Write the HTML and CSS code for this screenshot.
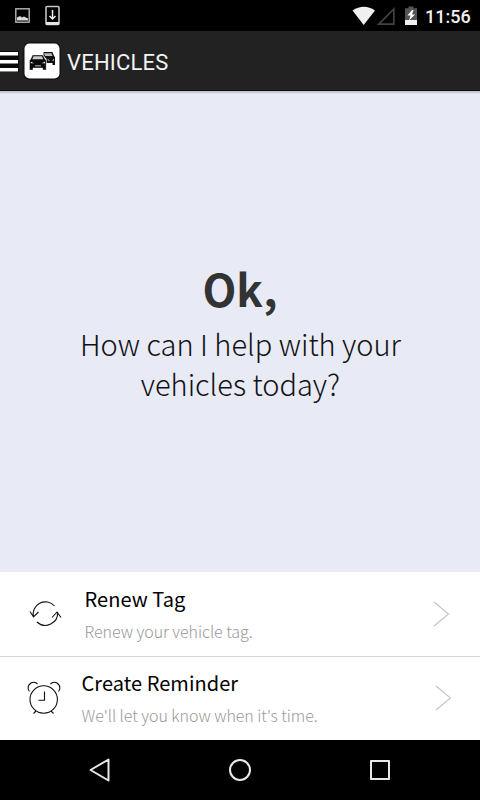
FILE: index.html
```
<!DOCTYPE html>
<html lang="en">
<head>
    <meta charset="UTF-8">
    <meta name="viewport" content="width=device-width, initial-scale=1.0">
    <title>Vehicles</title>
    <link rel="stylesheet" href="styles.css">
</head>
<body>

<div class="screen">
    <div class="status-bar">
        <svg class="status-left" width="70" height="31" viewBox="0 0 70 31">
            <rect x="15.800" y="8.800" width="13.400" height="13.400" fill="none" stroke="#b5b5b5" stroke-width="1.400"/>
            <path d="M17 20.500v-3l3-1.500 2 1.500 2-1 4 2v2z" fill="#d8d8d8"/>
            <rect x="46" y="6.500" width="13" height="18" rx="1" fill="none" stroke="#c4c4c4" stroke-width="1.600"/>
            <path d="M46 22h13v3H46z" fill="#e6e6e6"/>
            <path d="M52.500 10v9M49.500 16l3 3 3-3" fill="none" stroke="#f0f0f0" stroke-width="1.500"/>
        </svg>
        <svg class="status-right" width="70" height="31" viewBox="350 0 70 31">
            <path d="M352.500 10.500Q364 3 375 10.500L363.700 25z" fill="#f0f0f0"/>
            <path d="M393.800 9v15.200h-15z" fill="none" stroke="#434343" stroke-width="1.700"/>
            <path d="M405 8.200h3.500v-1.700h5v1.700h3.500V20h-12z" fill="#555"/>
            <path d="M405 20h12v5h-12z" fill="#f0f0f0"/>
            <path d="M412 10l-4.500 5.500h3l-1.500 5 6-6h-3l1.500-4.500z" fill="#fff"/>
        </svg>
        <span class="clock">11:56</span>
    </div>

    <div class="header">
        <svg class="menu-icon" width="20" height="60" viewBox="0 0 20 60">
            <path d="M0 20h19v21H0z" fill="#090909"/>
            <path d="M0 21h18v3.500H0zM0 29h18v3.500H0zM0 37h18v3.500H0z" fill="#fff"/>
        </svg>
        <svg class="app-icon" width="40" height="60" viewBox="22 31 40 60">
            <rect x="23.500" y="42.500" width="37" height="37" rx="6" fill="#080808"/>
            <rect x="24.500" y="43.500" width="35" height="35" rx="5" fill="#fff"/>
            <path d="M43.500 52h9l1.500 4 1 1v8h-2.500v-2h-6v-4l-3-3.500z" fill="#111"/>
            <path d="M44 53.300h7.500l1 2.700h-7.500z" fill="#bbb"/>
            <path d="M47.500 59l2.500 1.500h-2zM54 59l-2 1.500h2z" fill="#fff"/>
            <path d="M32.500 55h10.500l2 4 1.200 1.500V70h-3.500v-2H33v2h-3.500v-9.500l1.200-1.500z" fill="#0a0a0a" stroke="#fff" stroke-width=".4"/>
            <path d="M33.500 56.300h8.500l1.300 3H32.200z" fill="#ccc"/>
            <path d="M30.800 61.800l3.200 1.500h-3.200zM45 61.800l-3.200 1.500H45zM35 65.500h6v.7h-6z" fill="#fff"/>
        </svg>
        <span class="header-title">VEHICLES</span>
    </div>

    <div class="prompt">
        <h1>Ok,</h1>
        <p>How can I help with your<br>vehicles today?</p>
    </div>

    <div class="option">
        <svg class="option-icon" width="80" height="84" viewBox="0 572 80 84" fill="none" stroke="#111" stroke-width="1.100">
            <path d="M33.500 617A12.200 12.200 0 0 1 54.500 606M30 611.500l3.500 5.500 5-5M37 622A12.200 12.200 0 0 0 57.500 612M52 617.500l5-5.500 4 5.500"/>
        </svg>
        <div class="option-text">
            <div class="option-title">Renew Tag</div>
            <div class="option-desc">Renew your vehicle tag.</div>
        </div>
        <svg class="chevron" width="20" height="30" viewBox="0 0 20 30">
            <path d="M1 3l14.500 12L1 27"/>
        </svg>
    </div>

    <div class="option option-reminder">
        <svg class="option-icon" width="80" height="83" viewBox="0 657 80 83" fill="none" stroke="#111" stroke-width="1.100">
            <circle cx="43.700" cy="699.500" r="13.700"/>
            <path d="M44.500 691.500v8.700h-6M36 711l-2.500 2.500M51 711l2.500 2.500"/>
            <path d="M29.500 691.500C26 687 30 682 34 682.300Q36 682.500 37.500 684M58.500 691.500C62 687 58 682 54 682.300Q52 682.500 50.500 684"/>
        </svg>
        <div class="option-text">
            <div class="option-title">Create Reminder</div>
            <div class="option-desc">We'll let you know when it's time.</div>
        </div>
        <svg class="chevron" width="20" height="30" viewBox="0 0 20 30">
            <path d="M1 2l14.500 12L1 26"/>
        </svg>
    </div>

    <div class="nav-bar">
        <svg width="480" height="60" viewBox="0 740 480 60" fill="none" stroke="#e8e8e8" stroke-width="2" stroke-linejoin="round">
            <path d="M90.500 770l18-10.500v21z"/>
            <circle cx="240" cy="770" r="10"/>
            <rect x="371" y="761" width="18" height="18"/>
        </svg>
    </div>
</div>

</body>
</html>
```

FILE: styles.css
```
body {
    margin: 0;
    font-family: "Noto Sans CJK SC", sans-serif;
}
svg {
    display: block;
    flex-shrink: 0;
}
.screen {
    width: 480px;
    height: 800px;
    display: flex;
    flex-direction: column;
    overflow: hidden;
}
.status-bar {
    height: 31px;
    display: flex;
    align-items: center;
    background: #000;
}
.status-right {
    margin-left: auto;
}
.clock {
    width: 60px;
    padding: 1px 0 0 5px;
    box-sizing: border-box;
    font: 500 18px/31px Roboto, sans-serif;
    color: #f0f0f0;
}
.header {
    height: 60px;
    display: flex;
    align-items: center;
    background: #222;
    border-bottom: 1px solid #111;
    box-sizing: border-box;
}
.app-icon {
    margin-left: 2px;
}
.header-title {
    margin-left: 5px;
    padding-top: 4px;
    font: 400 22px/60px Roboto, sans-serif;
    letter-spacing: 0.2px;
    color: #f3f3f3;
}
.prompt {
    flex: 1;
    padding-top: 167px;
    box-sizing: border-box;
    background: linear-gradient(#b4b6c0, #e8eaf6 3px);
    text-align: center;
}
.prompt h1 {
    margin: 0;
    font-size: 44px;
    line-height: 60px;
    font-weight: 700;
    color: #333;
}
.prompt p {
    margin: 5px 0 0;
    padding-left: 1px;
    font-size: 29px;
    line-height: 40px;
    font-weight: 300;
    color: #111;
}
.option {
    height: 84px;
    display: flex;
    align-items: center;
    background: #fff;
}
.option-text {
    width: 320px;
    margin-left: 4.5px;
}
.option-title {
    padding-top: 1px;
    font-size: 20px;
    line-height: 30px;
    letter-spacing: 0.05px;
    color: #000;
}
.option-desc {
    margin-top: 2px;
    font-size: 16px;
    line-height: 30px;
    font-weight: 300;
    letter-spacing: -0.05px;
    color: #999;
}
.option-reminder {
    border-top: 1px solid #d4d4d4;
    box-sizing: border-box;
}
.option-reminder .option-text {
    margin-left: 1.5px;
    width: 325px;
}
.option-reminder .option-title {
    padding-top: 0;
}
.chevron {
    margin-left: 28px;
    fill: none;
    stroke: #c4c4c4;
    stroke-width: 1.1;
}
.nav-bar {
    height: 60px;
    background: #000;
}
```
